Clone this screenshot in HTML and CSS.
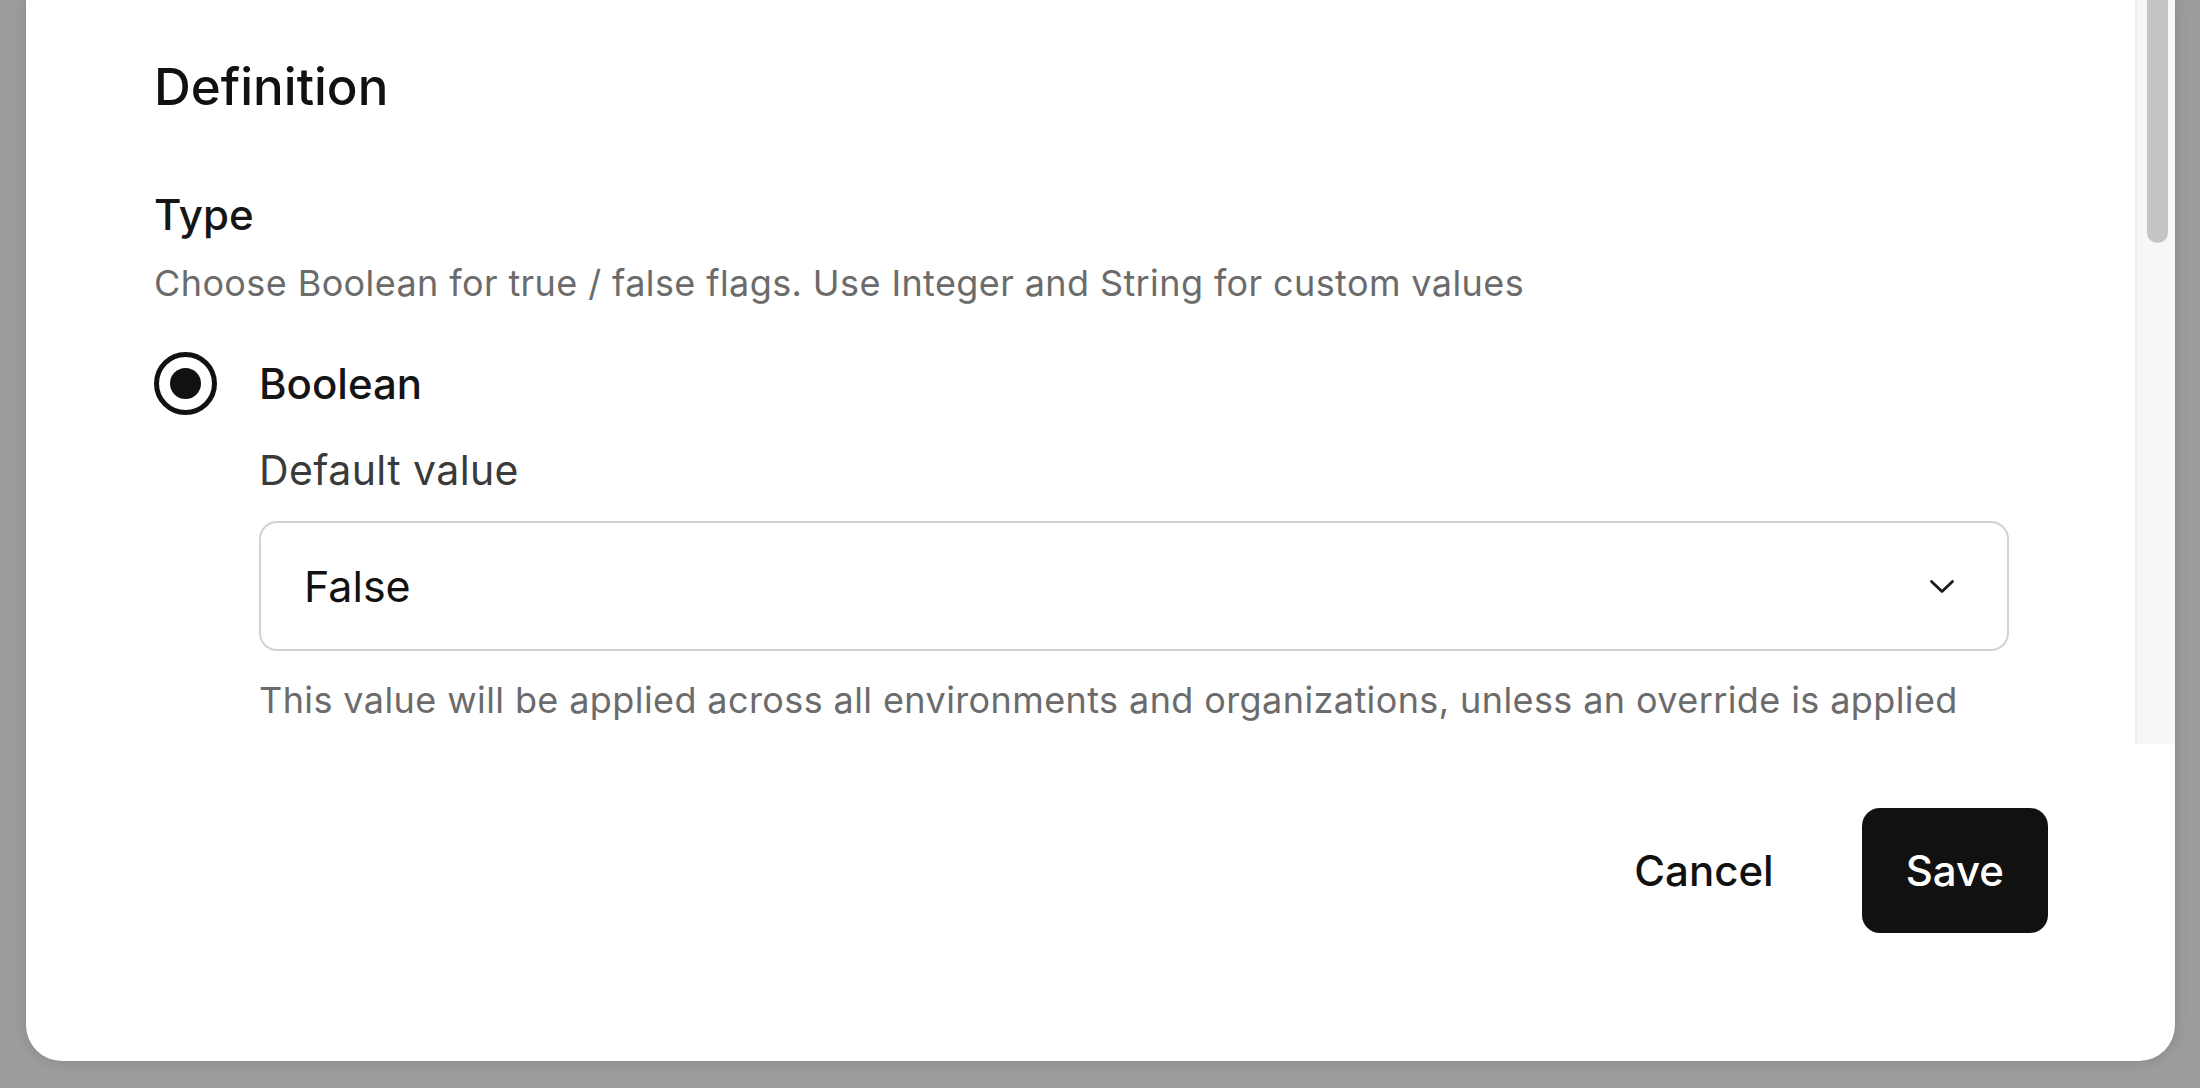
FILE: index.html
```html
<!DOCTYPE html>
<html lang="en">
<head>
<meta charset="utf-8">
<title>Definition</title>
<link rel="stylesheet" href="styles.css">
</head>
<body>
<div class="modal">
  <div class="modal-body">
    <div class="content">
      <h2 class="section-title">Definition</h2>
      <div class="field-label">Type</div>
      <p class="field-desc">Choose Boolean for true / false flags. Use Integer and String for custom values</p>
      <label class="radio-row">
        <span class="radio"><span class="radio-dot"></span></span>
        <span class="radio-label">Boolean</span>
      </label>
      <div class="sub-field">
        <div class="sub-label">Default value</div>
        <div class="select">
          <span class="select-value">False</span>
          <svg class="chevron" width="26" height="15" viewBox="0 0 26 15" aria-hidden="true">
            <path d="M2.5 2.5 L13 12.5 L23.5 2.5" fill="none" stroke="#1a1a1a" stroke-width="2.8" stroke-linecap="round" stroke-linejoin="round"/>
          </svg>
        </div>
        <p class="helper">This value will be applied across all environments and organizations, unless an override is applied</p>
      </div>
    </div>
    <div class="scroll-track"><div class="scroll-thumb"></div></div>
  </div>
  <div class="modal-footer">
    <button class="btn btn-ghost">Cancel</button>
    <button class="btn btn-primary">Save</button>
  </div>
</div>
</body>
</html>
```

FILE: styles.css
```css
html, body {
  margin: 0;
  padding: 0;
}
body {
  width: 2200px;
  height: 1088px;
  overflow: hidden;
  background: #9c9c9c;
  font-family: Inter, "Noto Sans", "Liberation Sans", sans-serif;
  color: #111;
}
.modal {
  margin-left: 26px;
  width: 2149px;
  height: 1061px;
  background: #fff;
  border-radius: 0 0 36px 36px;
  box-shadow: 0 0 14px rgba(0, 0, 0, 0.14);
  display: flex;
  flex-direction: column;
  overflow: hidden;
}
.modal-body {
  display: flex;
  height: 744px;
  flex: none;
}
.content {
  flex: 1;
  padding: 55px 126px 0 128px;
}
.section-title {
  margin: 0;
  font-size: 51px;
  line-height: 64px;
  font-weight: 500;
  color: #111;
}
.field-label {
  margin-top: 70px;
  font-size: 42px;
  line-height: 52px;
  font-weight: 500;
  color: #151515;
}
.field-desc {
  margin: 18px 0 0;
  font-size: 36px;
  line-height: 48px;
  letter-spacing: 0.4px;
  color: #6b6b6b;
}
.radio-row {
  margin-top: 45px;
  display: flex;
  align-items: center;
  gap: 42px;
}
.radio {
  width: 63px;
  height: 63px;
  box-sizing: border-box;
  border: 5px solid #111;
  border-radius: 50%;
  display: flex;
  align-items: center;
  justify-content: center;
  flex: none;
}
.radio-dot {
  width: 31px;
  height: 31px;
  border-radius: 50%;
  background: #111;
}
.radio-label {
  font-size: 42px;
  line-height: 52px;
  font-weight: 500;
  color: #151515;
}
.sub-field {
  padding-left: 105px;
}
.sub-label {
  margin-top: 29px;
  font-size: 41px;
  line-height: 52px;
  letter-spacing: 0.4px;
  color: #3a3a3a;
}
.select {
  margin-top: 25px;
  height: 130px;
  box-sizing: border-box;
  border: 2px solid #d2d2d2;
  border-radius: 18px;
  display: flex;
  align-items: center;
  justify-content: space-between;
  padding: 0 52px 0 43px;
}
.select-value {
  font-size: 43px;
  line-height: 52px;
  color: #111;
}
.chevron {
  display: block;
}
.helper {
  margin: 25px 0 0;
  font-size: 36px;
  line-height: 48px;
  letter-spacing: 0.4px;
  color: #6b6b6b;
}
.scroll-track {
  flex: none;
  border-left: 2px solid #ebebeb;
  background: #f7f7f7;
  padding: 0 7px 0 10px;
  box-sizing: content-box;
  width: 21px;
}
.scroll-thumb {
  height: 243px;
  background: #c4c4c4;
  border-radius: 0 0 11px 11px;
}
.modal-footer {
  flex: 1;
  display: flex;
  justify-content: flex-end;
  align-items: flex-start;
  gap: 44px;
  padding: 64px 127px 0 0;
}
.btn {
  height: 125px;
  padding: 0 44px;
  border: none;
  border-radius: 18px;
  font-family: Inter, "Noto Sans", "Liberation Sans", sans-serif;
  font-size: 42px;
  font-weight: 500;
  cursor: pointer;
}
.btn-ghost {
  background: transparent;
  color: #111;
}
.btn-primary {
  background: #111;
  color: #fff;
}
```
